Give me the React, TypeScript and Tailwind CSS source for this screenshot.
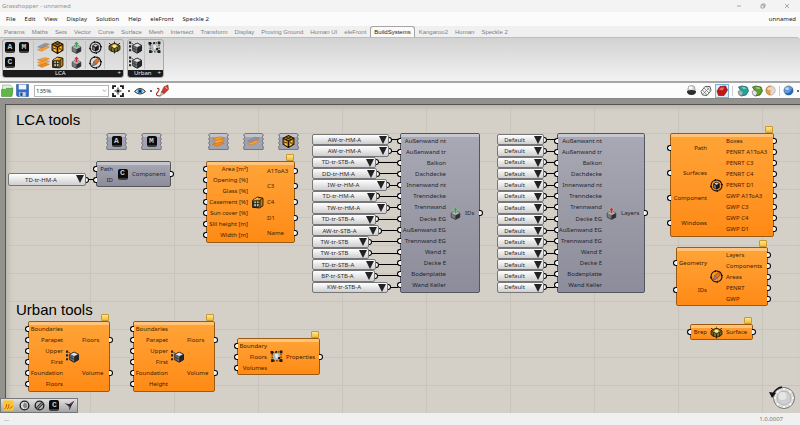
import type { ReactNode } from "react";

/* ---------- Icons ---------- */

type IconProps = { className?: string };

function Letter({ children }: { children: string }) {
  return (
    <span className="flex h-[11px] w-[10px] items-center justify-center rounded-[2px] border-b-2 border-[#3c3c3c] bg-[#0c0c0c] font-['Liberation_Mono',monospace] text-[8px] leading-[8px] font-bold text-[#c8c8c8]">
      {children}
    </span>
  );
}

function Svg({ className = "size-[12px]", children }: IconProps & { children: ReactNode }) {
  return (
    <svg viewBox="0 0 24 24" className={className} aria-hidden="true">
      {children}
    </svg>
  );
}

function Boards() {
  return (
    <Svg className="size-[13px]">
      <path d="M1 17 15 13 23 15 9 21Z" fill="#f58a12" stroke="#b86a14" strokeWidth=".8" />
      <path d="M1 12 15 8 23 10 9 15Z" fill="#ffa940" stroke="#b86a14" strokeWidth=".8" />
      <path d="M1 7 15 3 23 5 9 10Z" fill="#ff9d2b" stroke="#b86a14" strokeWidth=".8" />
    </Svg>
  );
}

function TwoBoards() {
  return (
    <Svg className="size-[13px]">
      <path d="M1 16 16 9 23 11 9 19Z" fill="#ff9d2b" stroke="#b9791f" strokeWidth=".8" />
      <path d="M1 11 15 4 23 6 9 13Z" fill="#8f96a6" stroke="#6d7280" strokeWidth=".8" />
    </Svg>
  );
}

function WoodBox() {
  return (
    <Svg className="size-[13px]">
      <path d="M12 1 22 6V17L12 23 2 17V6Z" fill="#c98514" stroke="#1d1200" strokeWidth="2" />
      <path d="M2 6 12 11 22 6M12 11V23" fill="none" stroke="#1d1200" strokeWidth="2.200" />
      <path d="M7 3.500 17 8.500M17 3.500 7 8.500" stroke="#1d1200" strokeWidth="1.500" />
      <path d="M5 11 9 16M5 16 9 19M15 14 19 11M15 19 19 15" stroke="#ffd65a" strokeWidth="2" />
      <path d="M14 12 20 17M4 13 10 15" stroke="#1d1200" strokeWidth="1.500" />
    </Svg>
  );
}

function WindowBox() {
  return (
    <Svg className="size-[13px]">
      <path d="M3 8 12 2 22 4V18L16 22 3 21Z" fill="#e09a1c" stroke="#1d1200" strokeWidth="1.800" />
      <path d="M5 9H15V20H5Z" fill="#b9c4b4" stroke="#1d1200" strokeWidth="1.800" />
      <path d="M10 9V20M5 14H15M15 9 22 4M18 7V20" stroke="#1d1200" strokeWidth="1.500" />
      <path d="M6 7 13 3.500" stroke="#ffe08a" strokeWidth="1.500" />
    </Svg>
  );
}

function Canister({ color }: { color: string }) {
  return (
    <Svg className="size-[13px]">
      <path d="M4 11 12 7 20 11V19L12 23 4 19Z" fill="#6a6c70" stroke="#333" strokeWidth="1.200" />
      <path d="M12 15 20 11V19L12 23Z" fill="#2f3033" />
      <path d="M4 11 12 7 20 11 12 15Z" fill="#a9adb0" />
      <path d="M12 1 17 6H14V12H10V6H7Z" fill={color} stroke="#dfeae0" strokeWidth=".6" />
      <path d="M6 14V18M9 16V20" stroke="#999" strokeWidth="1.200" />
    </Svg>
  );
}

function CycleRing() {
  return (
    <>
      <circle cx="12" cy="12" r="10" fill="none" stroke="#151515" strokeWidth="2" strokeDasharray="11.700 4" />
      <path d="M9 -.5 14 2 9 4.500ZM24.500 9 22 14 19.500 9ZM15 24.500 10 22 15 19.500ZM-.5 15 2 10 4.500 15Z" fill="#151515" />
    </>
  );
}

function CycleCube() {
  return (
    <Svg className="size-[13px]">
      <CycleRing />
      <path d="M6.500 8.500 12 5.500 17.500 8.500V16L12 19 6.500 16Z" fill="#17171a" stroke="#17171a" strokeWidth="1" />
      <path d="M8 8.500 12 6.500 16 8.500 12 11Z" fill="#c9ccd4" />
      <path d="M7.500 10.500 11 12.500V17.500L7.500 15.500Z" fill="#777b84" />
    </Svg>
  );
}

function CyclePen() {
  return (
    <Svg className="size-[13px]">
      <CycleRing />
      <path d="M7 18 9 10 16 4 19 8 14 15Z" fill="#ee6f1a" stroke="#7b3a10" strokeWidth="1.200" />
      <path d="M6 18.500 8.500 10.500 13 15.500Z" fill="#8291ac" stroke="#4a4a55" strokeWidth=".8" />
    </Svg>
  );
}

function SlabCube() {
  return (
    <Svg className="size-[13px]">
      <path d="M12 4 22 9V16L12 21 2 16V9Z" fill="#7b6f30" stroke="#28240c" strokeWidth="1.800" />
      <path d="M12 4 22 9 12 14 2 9Z" fill="#c9ab42" stroke="#28240c" strokeWidth="1.500" />
      <path d="M12 1V6M2 4 7 8M22 4 17 8M6 12V20M12 15V23M18 12V20" stroke="#28240c" strokeWidth="1.800" />
      <circle cx="12" cy="9.500" r="3" fill="#f2e6a8" />
    </Svg>
  );
}

function UrbanCube() {
  return (
    <Svg className="size-[13px]">
      <path d="M7 8 15 4 23 8V18L15 22.500 7 18Z" fill="#7f828a" stroke="#1b1b1b" strokeWidth="1.800" />
      <path d="M15 12 23 8V18L15 22.500Z" fill="#242529" />
      <path d="M7 8 15 4 23 8 15 12Z" fill="#dfe1e6" stroke="#1b1b1b" strokeWidth="1" />
      <path d="M7 13 15 17M11 10.500V20" stroke="#222" strokeWidth="1.200" />
      <path d="M0 1H4V5H0ZM0 8H4V12H0ZM0 15H4V19H0ZM5 4H7V6H5Z" fill="#222" />
    </Svg>
  );
}

function Bounds() {
  return (
    <Svg className="size-[13px]">
      <path d="M4 5 20 3 21 20 4 20Z" fill="none" stroke="#1b1b1b" strokeWidth="1.800" strokeDasharray="3 2" />
      <circle cx="12" cy="12" r="6.500" fill="#a7b3b4" />
      <path d="M9 8 14 7 16 13 11 16Z" fill="#e1efe8" />
      <path d="M1 2H6V7H1ZM18 1H23V6H18ZM18 17H23V22H18ZM2 17H7V22H2ZM10 2H13V5H10ZM15 13H19V17H15Z" fill="#1b1b1b" />
    </Svg>
  );
}

/* ---------- Header ---------- */

const menus = ["File", "Edit", "View", "Display", "Solution", "Help", "eleFront", "Speckle 2"];
const tabs = [
  "Params", "Maths", "Sets", "Vector", "Curve", "Surface", "Mesh", "Intersect", "Transform",
  "Display", "Proving Ground", "Human UI", "eleFront", "BuildSystems", "Kangaroo2", "Human", "Speckle 2",
];

function TitleBar() {
  return (
    <header className="flex h-3 items-center justify-between bg-[#f3f3f3] pr-[10px] pl-[2px] text-[#929292]">
      <h1>Grasshopper - unnamed</h1>
      <div className="flex gap-[18px]">
        <button aria-label="Minimize" className="size-[6px]">
          <svg viewBox="0 0 6 6"><path d="M1 3H5" stroke="#888" strokeWidth=".7" /></svg>
        </button>
        <button aria-label="Restore" className="size-[6px]">
          <svg viewBox="0 0 6 6"><path d="M1 2H4V5H1ZM2 2V1H5V4H4" fill="none" stroke="#888" strokeWidth=".7" /></svg>
        </button>
        <button aria-label="Close" className="size-[6px]">
          <svg viewBox="0 0 6 6"><path d="M1 1 5 5M5 1 1 5" stroke="#888" strokeWidth=".7" /></svg>
        </button>
      </div>
    </header>
  );
}

function MenuBar() {
  return (
    <nav className="flex h-[14px] items-center justify-between bg-[#fbfbfb] pr-1 pl-[6px] text-[#222]">
      <div className="flex gap-[9px]">
        {menus.map((m) => (
          <button key={m}>{m}</button>
        ))}
      </div>
      <span>unnamed</span>
    </nav>
  );
}

function TabBar() {
  return (
    <div className="flex h-[11px] items-end gap-px bg-[#f0f0f0] pl-px font-['Liberation_Sans',sans-serif] text-[#808080]">
      {tabs.map((t) => (
        <button
          key={t}
          className={
            t === "BuildSystems"
              ? "h-[11px] rounded-t-[3px] border border-b-0 border-[#a5a5a5] bg-[#fafafa] px-[3px] text-[#222]"
              : "h-[10px] px-[3px]"
          }
        >
          {t}
        </button>
      ))}
    </div>
  );
}

function IconColumn({ children }: { children: ReactNode }) {
  return <div className="flex w-[14px] flex-col items-center gap-[2px]">{children}</div>;
}

function Tool({ name, children }: { name: string; children: ReactNode }) {
  return (
    <button aria-label={name} className="flex size-[13px] items-center justify-center">
      {children}
    </button>
  );
}

function Divider() {
  return <div className="mx-[2px] h-[28px] w-px bg-[#c2c2c2]" />;
}

function Panel({ title, children }: { title: string; children: ReactNode }) {
  return (
    <section className="flex flex-col overflow-hidden rounded-[3px] border border-[#aaa] bg-linear-to-b from-[#d2d2d2] to-[#e6e6e6]">
      <div className="flex h-[30px] items-center pr-[2px]">{children}</div>
      <div className="flex h-[7px] items-center justify-center bg-[#1c1c1c] text-[#f0f0f0]">
        <h2 className="flex-1 text-center leading-[7px]">{title}</h2>
        <span className="pr-[2px] leading-[7px]">+</span>
      </div>
    </section>
  );
}

function Ribbon() {
  return (
    <div className="flex h-[46px] items-start gap-[3px] rounded-tr-[4px] border-t border-b-2 border-t-[#bdbdbd] border-b-[#a6a6a6] bg-linear-to-b from-[#d2d2d2] to-[#f2f2f2] px-[2px] pt-px">
      <Panel title="LCA">
        <IconColumn>
          <Tool name="Assembly"><Letter>A</Letter></Tool>
          <Tool name="Component"><Letter>C</Letter></Tool>
        </IconColumn>
        <IconColumn>
          <Tool name="Material"><Letter>M</Letter></Tool>
          <span className="size-[13px]" />
        </IconColumn>
        <Divider />
        <IconColumn>
          <Tool name="Layer"><TwoBoards /></Tool>
          <Tool name="Boards"><Boards /></Tool>
        </IconColumn>
        <IconColumn>
          <Tool name="Timber frame"><WoodBox /></Tool>
          <Tool name="Window"><WindowBox /></Tool>
        </IconColumn>
        <Divider />
        <IconColumn>
          <Tool name="Component IDs"><Canister color="#35a24c" /></Tool>
          <Tool name="Component layers"><Canister color="#c92f2f" /></Tool>
        </IconColumn>
        <Divider />
        <IconColumn>
          <Tool name="LCA of boxes"><CycleCube /></Tool>
          <Tool name="LCA of geometry"><CyclePen /></Tool>
        </IconColumn>
        <Divider />
        <IconColumn>
          <Tool name="Brep surface"><SlabCube /></Tool>
          <span className="size-[13px]" />
        </IconColumn>
      </Panel>
      <Panel title="Urban">
        <IconColumn>
          <Tool name="Building by floors"><UrbanCube /></Tool>
          <Tool name="Building by height"><UrbanCube /></Tool>
        </IconColumn>
        <Divider />
        <IconColumn>
          <Tool name="Building properties"><Bounds /></Tool>
          <span className="size-[13px]" />
        </IconColumn>
      </Panel>
    </div>
  );
}

/* ---------- Canvas toolbar ---------- */

function Ball({ base, shade, half }: { base: string; shade: string; half?: boolean }) {
  return (
    <Svg className="size-[11px]">
      <circle cx="12" cy="12" r="10" fill={base} stroke="#444" strokeWidth="1" />
      {half ? <path d="M12 2A10 10 0 0 1 12 22Z" fill={shade} /> : <path d="M20 6A10 10 0 0 1 4 18Q16 20 20 6Z" fill={shade} />}
      <ellipse cx="9" cy="8" rx="4" ry="3" fill="#fff" opacity=".6" />
    </Svg>
  );
}

function Blob({ base, cap, shade }: { base: string; cap: string; shade: string }) {
  return (
    <Svg>
      <path d="M3 4 10 2 20 4 23 12 18 20 8 22 5 16 8 12Z" fill={base} stroke={shade} strokeWidth="1.500" />
      <path d="M2 13 8 10 13 16 9 22 4 20Z" fill={cap} stroke="#555" strokeWidth="1" />
      <path d="M9 4 16 4 19 8 12 8Z" fill="#fff" opacity=".4" />
    </Svg>
  );
}

function Toolbar() {
  return (
    <div className="flex h-[16px] items-center justify-between border-b border-[#888] bg-[#fcfcfc] pr-px pl-px">
      <div className="flex items-center">
        <button aria-label="Open">
          <Svg className="size-[13px]">
            <path d="M3 2H17L21 6V20H3Z" fill="#e3efe0" stroke="#6d9a67" strokeWidth="1" />
            <path d="M1 10H8L10 8H22L20 23H1Z" fill="#5fb848" stroke="#3d8030" strokeWidth="1" />
          </Svg>
        </button>
        <button aria-label="Save" className="ml-[2px]">
          <Svg className="size-[13px]">
            <path d="M1 1H23V23H3L1 21Z" fill="#2f6fc7" stroke="#1c4589" strokeWidth="1" />
            <path d="M5 1H19V10H5Z" fill="#f2f6fb" />
            <path d="M6 15H18V23H6Z" fill="#c5d4e8" />
            <path d="M8 16H12V22H8Z" fill="#1c4589" />
          </Svg>
        </button>
        <div className="relative ml-[5px] h-[12px] w-[75px]">
          <select
            aria-label="Zoom"
            defaultValue="135%"
            className="block size-full appearance-none border border-[#b5b5b5] bg-white pl-px text-[6px] leading-[10px] text-[#333]"
          >
            <option>100%</option>
            <option>135%</option>
          </select>
          <svg viewBox="0 0 6 6" className="pointer-events-none absolute top-[3px] right-[2px] size-[5px]">
            <path d="M1 2 3 4 5 2" fill="none" stroke="#777" strokeWidth=".8" />
          </svg>
        </div>
        <button aria-label="Zoom extents" className="ml-[3px]">
          <Svg>
            <path d="M2 8V2H8M16 2H22V8M22 16V22H16M8 22H2V16" fill="none" stroke="#151515" strokeWidth="3.500" />
            <path d="M9 9H15V15H9ZM11 5H13V8H11ZM11 16H13V19H11ZM5 11H8V13H5ZM16 11H19V13H16Z" fill="#151515" />
          </Svg>
        </button>
        <span className="mx-1 size-[2px] rounded-full bg-[#333]" />
        <button aria-label="Named views">
          <Svg>
            <path d="M1 13Q12 1 23 13 12 23 1 13Z" fill="#dcebf3" stroke="#222" strokeWidth="2" />
            <circle cx="12" cy="12.500" r="5" fill="#2d80b8" />
            <circle cx="12" cy="12.500" r="2" fill="#111" />
          </Svg>
        </button>
        <span className="mx-1 size-[2px] rounded-full bg-[#333]" />
        <button aria-label="Sketch">
          <Svg className="size-[13px]">
            <path d="M10 15 15 5 22 2 23 10 15 18Z" fill="#d63a31" stroke="#6b1512" strokeWidth="1" />
            <path d="M17 5 21 9" stroke="#f4a09a" strokeWidth="2" />
            <path d="M10 15 15 18 8 22Z" fill="#f1cf9b" stroke="#444" strokeWidth=".8" />
            <path d="M2 8Q9 8 3 15T8 22" fill="none" stroke="#a02b20" strokeWidth="2" />
          </Svg>
        </button>
      </div>
      <div className="flex items-center gap-[3px]">
        <button aria-label="No preview">
          <Svg className="size-[11px]">
            <circle cx="12" cy="9" r="8" fill="#d5d5d5" stroke="#666" strokeWidth="1" />
            <path d="M2 13Q12 9 22 13 22 22 12 22 2 22 2 13Z" fill="#2c2c2c" />
            <ellipse cx="10" cy="6" rx="4" ry="3" fill="#fff" />
          </Svg>
        </button>
        <button aria-label="Wireframe preview">
          <Svg>
            <path d="M2 13 10 3 20 3 22 11 14 21 5 20Z" fill="#f4f4f4" stroke="#555" strokeWidth="1.800" />
            <path d="M5 10 14 20M8 6 18 16M12 3 21 12M5 19 19 5" stroke="#666" strokeWidth="1.300" />
          </Svg>
        </button>
        <button aria-label="Shaded preview" className="flex h-[14px] w-[14px] items-center justify-center border border-[#7db4dc] bg-[#dcecf8]">
          <Svg>
            <path d="M2 12 8 3 19 2 23 10 16 21 5 21Z" fill="#c01818" stroke="#6d0808" strokeWidth="1.200" />
            <path d="M6 9 10 5 17 5 13 11Z" fill="#ef6a5e" />
          </Svg>
        </button>
        <span className="h-[10px] w-px bg-[#ccc]" />
        <span className="flex items-center gap-[2px] pl-px">
          <button aria-label="Preview selected"><Blob base="#24a39b" cap="#9fb5b3" shade="#0c5d5f" /></button>
          <button aria-label="Preview settings"><Blob base="#5fa02c" cap="#e4e4e4" shade="#2c5b1c" /></button>
          <button aria-label="Mesh quality"><Ball base="#f29a3c" shade="#d9d9d9" half /></button>
        </span>
        <span className="h-[10px] w-px bg-[#ccc]" />
        <button aria-label="Document preview"><Ball base="#5e9be0" shade="#2c66ae" /></button>
        <span className="size-[2px] rounded-full bg-[#333]" />
      </div>
    </div>
  );
}

/* ---------- Canvas ---------- */

const assemblies = [
  "Außenwand nt", "Außenwand tr", "Balkon", "Dachdecke", "Innenwand nt", "Trenndecke", "Trennwand",
  "Decke EG", "Außenwand EG", "Trennwand EG", "Wand E", "Decke E", "Bodenplatte", "Wand Keller",
];

// The layer picker names its first slot with a trailing "t".
const layerInputs = ["Außenwant nt", ...assemblies.slice(1)];

type NodeSpec = {
  id: string;
  place: string;
  inputWidth: string;
  inputs: string[];
  outputs: string[];
  icon: ReactNode;
  gray?: boolean;
};

const nodes: NodeSpec[] = [
  {
    id: "component", gray: true, place: "left-[96px] top-[62px] h-[26px] w-[75px]", inputWidth: "w-[16px]",
    inputs: ["Path", "ID"], outputs: ["Component"], icon: <Letter>C</Letter>,
  },
  {
    id: "window", place: "left-[206px] top-[62px] h-[82px] w-[89px]", inputWidth: "w-[41px]",
    inputs: ["Area [m²]", "Opening [%]", "Glass [%]", "Casement [%]", "Sun cover [%]", "Sill height [m]", "Width [m]"],
    outputs: ["A1ToA3", "C3", "C4", "D1", "Name"], icon: <WindowBox />,
  },
  {
    id: "ids", gray: true, place: "left-[400px] top-[34px] h-[160px] w-[80px]", inputWidth: "w-[45px]",
    inputs: assemblies, outputs: ["IDs"], icon: <Canister color="#35a24c" />,
  },
  {
    id: "layers", gray: true, place: "left-[557px] top-[34px] h-[160px] w-[88px]", inputWidth: "w-[44px]",
    inputs: layerInputs, outputs: ["Layers"], icon: <Canister color="#c92f2f" />,
  },
  {
    id: "boxes", place: "left-[670px] top-[34px] h-[104px] w-[104px]", inputWidth: "w-[36px]",
    inputs: ["Path", "Surfaces", "Component", "Windows"],
    outputs: ["Boxes", "PENRT A1ToA3", "PENRT C3", "PENRT C4", "PENRT D1", "GWP A1ToA3", "GWP C3", "GWP C4", "GWP D1"],
    icon: <CycleCube />,
  },
  {
    id: "geometry", place: "left-[676px] top-[148px] h-[59px] w-[92px]", inputWidth: "w-[30px]",
    inputs: ["Geometry", "IDs"], outputs: ["Layers", "Components", "Areas", "PENRT", "GWP"], icon: <CyclePen />,
  },
  {
    id: "brep", place: "left-[690px] top-[225px] h-[16px] w-[63px]", inputWidth: "w-[16px]",
    inputs: ["Brep"], outputs: ["Surface"], icon: <SlabCube />,
  },
  {
    id: "floors", place: "left-[28px] top-[222px] h-[71px] w-[82px]", inputWidth: "w-[34px]",
    inputs: ["Boundaries", "Parapet", "Upper", "First", "Foundation", "Floors"],
    outputs: ["Floors", "Volume"], icon: <UrbanCube />,
  },
  {
    id: "height", place: "left-[133px] top-[222px] h-[71px] w-[82px]", inputWidth: "w-[34px]",
    inputs: ["Boundaries", "Parapet", "Upper", "First", "Foundation", "Height"],
    outputs: ["Floors", "Volume"], icon: <UrbanCube />,
  },
  {
    id: "properties", place: "left-[237px] top-[239px] h-[37px] w-[83px]", inputWidth: "w-[29px]",
    inputs: ["Boundary", "Floors", "Volumes"], outputs: ["Properties"], icon: <Bounds />,
  },
];

function InPort() {
  return <i className="absolute left-[-4px] h-[6px] w-[4px] rounded-l-full border border-r-0 border-black bg-[#f4f4f4]" />;
}

function OutPort() {
  return <i className="absolute right-[-4px] h-[6px] w-[4px] rounded-r-full border border-l-0 border-black bg-[#f4f4f4]" />;
}

function GraphNode({ node }: { node: NodeSpec }) {
  return (
    <article
      className={`absolute flex rounded-[2px] border ${node.place} ${
        node.gray
          ? "border-[#55555f] bg-linear-to-b from-[#a9a9b5] to-[#8c8c9a] text-[#25252b]"
          : "border-[#9a5a12] bg-linear-to-b from-[#ffa436] to-[#ff8a14] text-[#3d2200]"
      }`}
    >
      <span className="absolute inset-x-0 top-0 h-[3px] bg-white/35" />
      <ul className={`flex flex-col py-px ${node.inputWidth}`}>
        {node.inputs.map((label) => (
          <li key={label} className="relative flex min-h-0 flex-1 items-center justify-end whitespace-nowrap">
            <InPort />
            {label}
          </li>
        ))}
      </ul>
      <div className="flex w-[19px] items-center justify-center">{node.icon}</div>
      <ul className="flex flex-1 flex-col py-px">
        {node.outputs.map((label) => (
          <li key={label} className="relative flex min-h-0 flex-1 items-center whitespace-nowrap">
            {label}
            <OutPort />
          </li>
        ))}
      </ul>
      {!node.gray && (
        <span className="absolute top-[-8px] right-0 h-[7px] w-[8px] rounded-[1px] border border-[#c79a2a] bg-linear-to-b from-[#ffe58a] to-[#f5bd2c]" />
      )}
    </article>
  );
}

function ValueList({ value, label, width }: { value: string; label: string; width: string }) {
  return (
    <div className="flex min-h-0 flex-1 items-center">
      <div className={`relative h-full ${width}`}>
        <select
          aria-label={label}
          defaultValue={value}
          className="block size-full appearance-none rounded-[2px] border border-[#77777a] bg-linear-to-b from-white to-[#cfcfcf] pr-[12px] text-center text-[#2b2b2b]"
        >
          <option>{value}</option>
        </select>
        <svg viewBox="0 0 8 8" className="pointer-events-none absolute top-[2px] right-[2px] size-[8px]">
          <path d="M0 0H8L4 8Z" fill="#222" />
        </svg>
      </div>
      <i className="h-[6px] w-[3px] rounded-r-full border border-l-0 border-black bg-[#f4f4f4]" />
      <i className="h-px flex-1 bg-black" />
    </div>
  );
}

const idLists: [string, string][] = [
  ["AW-tr-HM-A", "w-[77px]"], ["AW-tr-HM-A", "w-[77px]"], ["TD-tr-STB-A", "w-[64px]"], ["DD-tr-HM-A", "w-[65px]"],
  ["IW-tr-HM-A", "w-[75px]"], ["TD-tr-HM-A", "w-[65px]"], ["TW-tr-HM-A", "w-[75px]"], ["TD-tr-STB-A", "w-[64px]"],
  ["AW-tr-STB-A", "w-[67px]"], ["TW-tr-STB", "w-[57px]"], ["TW-tr-STB", "w-[57px]"], ["TD-tr-STB-A", "w-[64px]"],
  ["BP-tr-STB-A", "w-[63px]"], ["KW-tr-STB-A", "w-[76px]"],
];

function Param({ place, children }: { place: string; children: ReactNode }) {
  return (
    <div className={`absolute flex h-[17px] w-[21px] items-center justify-center ${place}`}>
      <svg viewBox="0 0 21 17" className="absolute inset-0" aria-hidden="true">
        <path
          d="M2 .5H19L20.500 2 19 4 20.500 6 19 8 20.500 10 19 12 20.500 14 20 16.500H1L.5 14 2 12 .5 10 2 8 .5 6 2 4 .5 2Z"
          fill="#a2a3b0"
          stroke="#66676f"
          strokeWidth=".8"
        />
        <path d="M2 1H19V4H2Z" fill="#fff" opacity=".35" />
      </svg>
      <span className="relative">{children}</span>
    </div>
  );
}

function Compass() {
  return (
    <svg viewBox="0 0 28 26" className="absolute right-[4px] bottom-[3px] h-[26px] w-[28px]" aria-hidden="true">
      <circle cx="16" cy="14" r="10.500" fill="#dedede" stroke="#777" strokeWidth="1" />
      <circle cx="16" cy="14" r="7" fill="#cfcfcf" stroke="#a8a8a8" strokeWidth=".8" />
      <circle cx="14.500" cy="12" r="4" fill="#e6e6e6" />
      <path d="M16 4V6M16 22V24M6 14H8M24 14H26M9 7 10.500 8.500M23 21 21.500 19.500M23 7 21.500 8.500M9 21 10.500 19.500" stroke="#fff" strokeWidth="1.500" />
      <path d="M14 3Q8 4 5 10" fill="none" stroke="#111" strokeWidth="1.500" />
      <path d="M1 8 8 9 4 14Z" fill="#111" />
    </svg>
  );
}

function Canvas() {
  return (
    <main className="relative min-h-[314px] flex-1 overflow-hidden bg-[#94928d] pt-[5px] pl-[5px]">
      <div className="h-full min-h-[309px] border-t border-l border-[#55534f] bg-[#d4d0c8] bg-[linear-gradient(to_right,#c8c5bd_1px,transparent_1px),linear-gradient(to_bottom,#c8c5bd_1px,transparent_1px)] bg-[size:84px_28px] shadow-[inset_3px_3px_4px_#bcb8b0]" />

      <h2 className="absolute top-[11px] left-[16px] font-['Liberation_Sans',sans-serif] text-[15px] leading-[20px] text-black">LCA tools</h2>
      <h2 className="absolute top-[201px] left-[16px] font-['Liberation_Sans',sans-serif] text-[15px] leading-[20px] text-black">Urban tools</h2>

      <Param place="left-[106px] top-[34px]"><Letter>A</Letter></Param>
      <Param place="left-[141px] top-[34px]"><Letter>M</Letter></Param>
      <Param place="left-[208px] top-[34px]"><Boards /></Param>
      <Param place="left-[243px] top-[34px]"><TwoBoards /></Param>
      <Param place="left-[278px] top-[34px]"><WoodBox /></Param>

      <div className="absolute top-[74px] left-[8px] flex h-[13px] w-[86px] flex-col">
        <ValueList value="TD-tr-HM-A" label="Component ID" width="w-[78px]" />
      </div>
      <div className="absolute top-[35px] left-[312px] flex h-[159px] w-[86px] flex-col">
        {idLists.map(([value, width], i) => (
          <ValueList key={i} value={value} label={`ID ${assemblies[i]}`} width={width} />
        ))}
      </div>
      <div className="absolute top-[35px] left-[497px] flex h-[159px] w-[58px] flex-col">
        {assemblies.map((name) => (
          <ValueList key={name} value="Default" label={`Layer ${name}`} width="w-[47px]" />
        ))}
      </div>

      {nodes.map((node) => (
        <GraphNode key={node.id} node={node} />
      ))}

      <div className="absolute bottom-0 left-0 flex h-[15px] w-[78px] items-center justify-around border border-[#77777a] bg-linear-to-b from-[#e2e2e2] to-[#a4a4a4]">
        <button aria-label="Markov widget">
          <Svg className="size-[11px]">
            <path d="M1 1H23V23H1Z" fill="#ffc62c" />
            <path d="M3 20Q9 16 8 9M9 20Q14 16 13 9M14 19 21 14" fill="none" stroke="#b4560c" strokeWidth="2" />
          </Svg>
        </button>
        <button aria-label="Align widget">
          <Svg className="size-[11px]">
            <circle cx="12" cy="12" r="9.500" fill="#ddd" stroke="#222" strokeWidth="3" />
            <path d="M12 5 18 9V15L12 19 8 12Z" fill="#888" />
          </Svg>
        </button>
        <button aria-label="Profiler widget">
          <Svg className="size-[11px]">
            <circle cx="12" cy="12" r="9.500" fill="#bbb" stroke="#222" strokeWidth="3" />
            <path d="M5 17 17 5M8 20 20 8" stroke="#333" strokeWidth="2.500" />
          </Svg>
        </button>
        <button aria-label="Component finder"><Letter>C</Letter></button>
        <button aria-label="Compass widget">
          <Svg className="size-[11px]">
            <path d="M1 7 11 9 23 1 17 11 12 22 10 13Z" fill="#1d1d2e" />
            <path d="M12 10 20 4 16 10Z" fill="#b3392c" />
            <path d="M10 13 14 14 12 22Z" fill="#5b4fb0" />
          </Svg>
        </button>
      </div>

      <Compass />
    </main>
  );
}

export default function App() {
  return (
    <div className="flex min-h-screen flex-col bg-[#f0f0f0] font-['Noto_Sans',sans-serif] text-[6px] leading-[8px]">
      <TitleBar />
      <MenuBar />
      <TabBar />
      <Ribbon />
      <Toolbar />
      <Canvas />
      <footer className="flex h-[12px] items-center justify-between bg-[#f0f0f0] pr-[17px] pl-1 text-[#777]">
        <span>...</span>
        <span>1.0.0007</span>
      </footer>
    </div>
  );
}
